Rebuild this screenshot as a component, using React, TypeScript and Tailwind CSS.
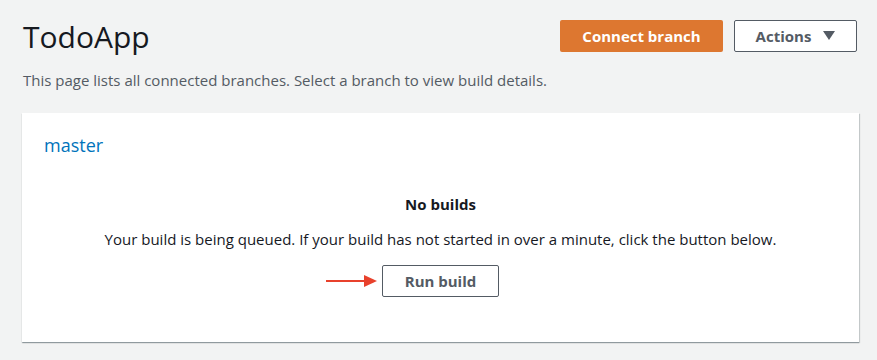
import React from "react";

export default function App() {
  return (
    <div className="w-[877px] h-[360px] bg-[#f2f3f3] overflow-hidden" style={{ fontFamily: '"Open Sans", "Noto Sans", sans-serif' }}>
      <div className="pl-[22px] pr-[20px] pt-[20px]">
        <div className="flex items-start justify-between">
          <h1 className="text-[30px] leading-[36px] text-[#16191f] mt-[-1px] ml-[1px]">TodoApp</h1>
          <div className="flex gap-[11px]">
            <button className="h-[32px] w-[163px] rounded-[2px] bg-[#dd7730] text-white font-bold text-[15px] leading-none">
              Connect branch
            </button>
            <button className="h-[32px] w-[123px] rounded-[2px] border border-[#545b64] bg-white text-[#545b64] font-bold text-[15px] leading-none flex items-center justify-center gap-[12px]">
              <span>Actions</span>
              <svg width="12" height="10" viewBox="0 0 12 10"><path d="M0 0 H12 L6 9 Z" fill="#545b64" /></svg>
            </button>
          </div>
        </div>
        <p className="text-[15px] leading-[20px] text-[#545b64] mt-[15px] ml-[1px]">
          This page lists all connected branches. Select a branch to view build details.
        </p>
        <div className="mt-[23px] w-[837px] h-[229px] bg-white shadow-[0_1px_1px_0_rgba(0,28,36,0.3),1px_1px_1px_0_rgba(0,28,36,0.15)] flex flex-col">
          <div className="pl-[22px] pt-[20px]">
            <span className="text-[18px] leading-[24px] text-[#0073bb]">master</span>
          </div>
          <div className="flex flex-col items-center mt-[36px]">
            <div className="text-[15px] leading-[20px] font-bold text-[#16191f]">No builds</div>
            <div className="text-[15px] leading-[20px] text-[#16191f] mt-[15px]">
              Your build is being queued. If your build has not started in over a minute, click the button below.
            </div>
            <div className="relative mt-[16px]">
              <button className="h-[32px] w-[117px] rounded-[2px] border border-[#545b64] bg-white text-[#545b64] font-bold text-[15px] leading-none">
                Run build
              </button>
              <svg className="absolute left-[-56px] top-[9px]" width="52" height="14" viewBox="0 0 52 14">
                <line x1="0" y1="7" x2="40" y2="7" stroke="#e8412c" strokeWidth="2" />
                <path d="M38 1 L51 7 L38 13 Z" fill="#e8412c" />
              </svg>
            </div>
          </div>
        </div>
      </div>
    </div>
  );
}
